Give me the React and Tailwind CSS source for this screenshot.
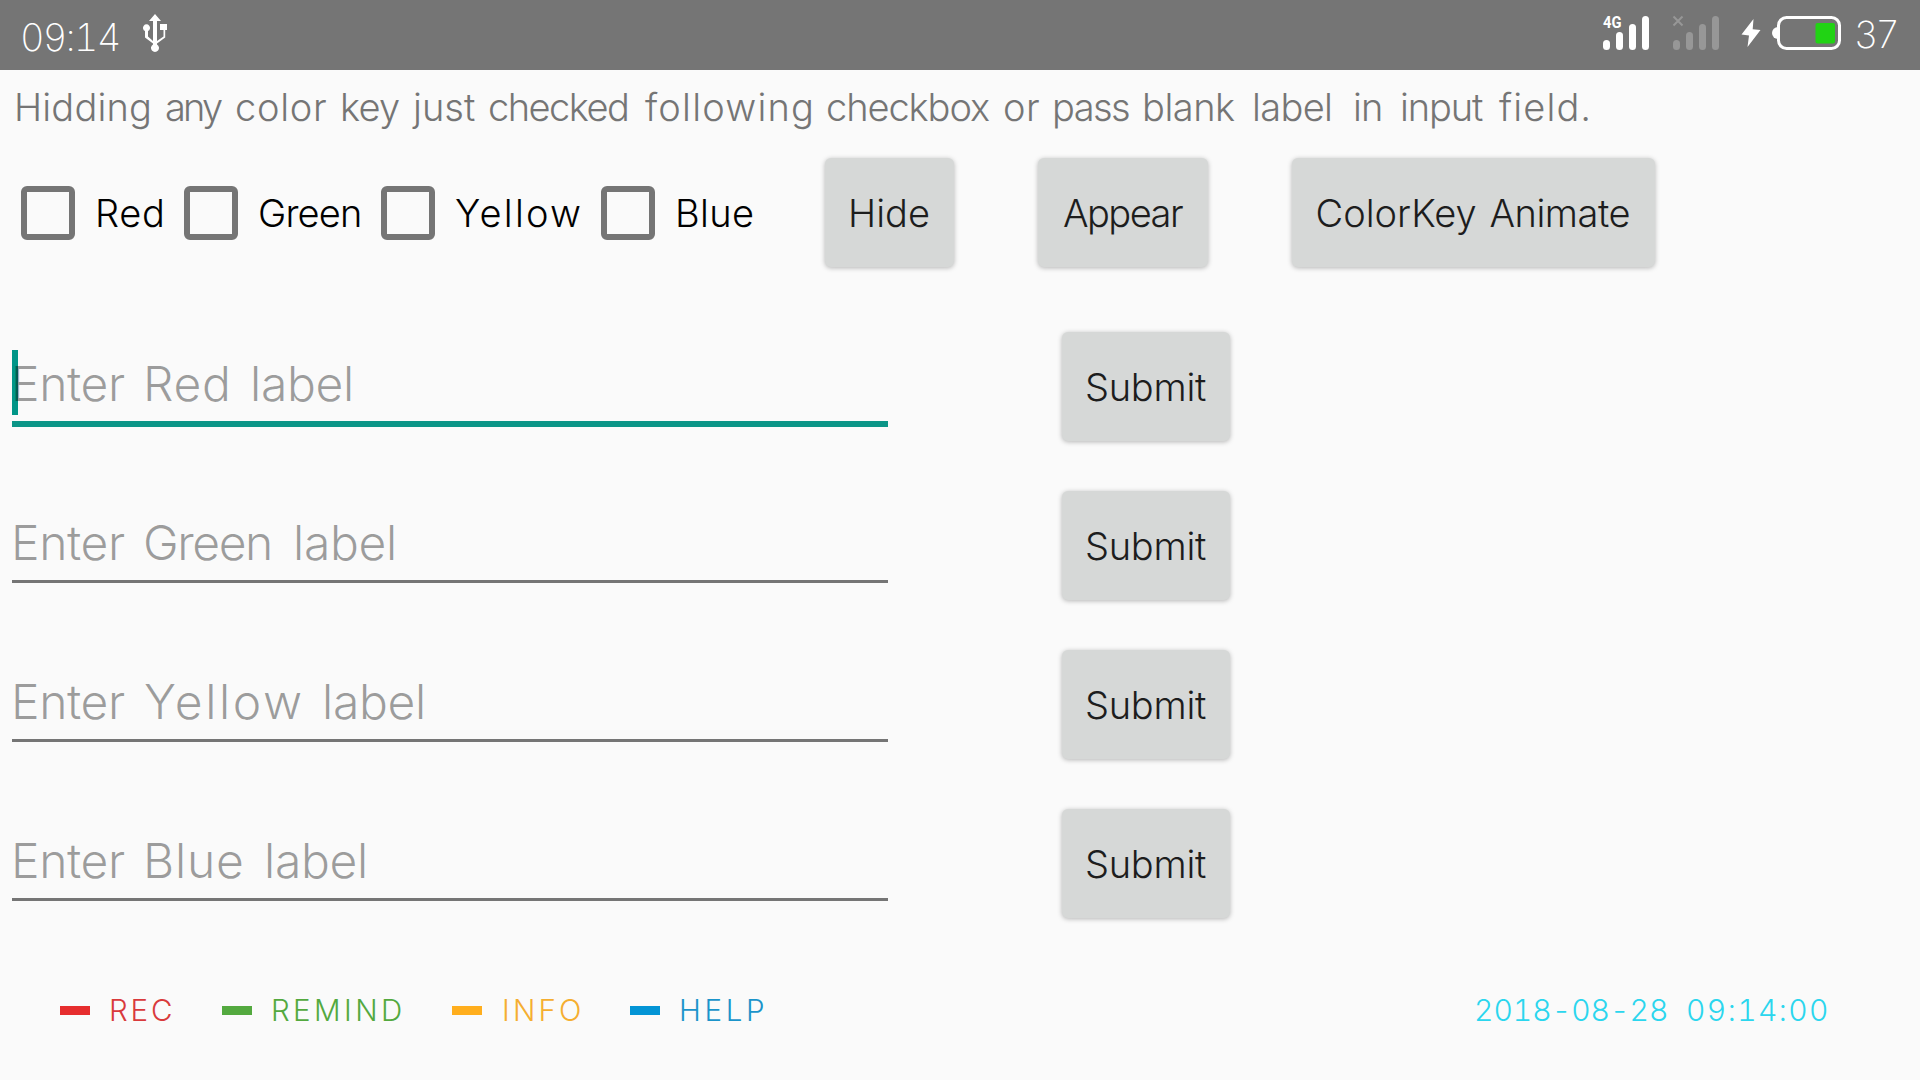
import React, { useLayoutEffect, useRef, useState } from 'react';

const FAMILY = 'Inter, "Liberation Sans", sans-serif';

// One word whose letters are tracked so that its ink spans exactly `w` pixels.
function Word({ text, size, w, weight = 300 }) {
  const ref = useRef(null);
  const [fit, setFit] = useState({ spacing: 0, shift: 0 });
  useLayoutEffect(() => {
    const el = ref.current;
    el.style.letterSpacing = '0px';
    const advance = el.getBoundingClientRect().width;
    const ctx = document.createElement('canvas').getContext('2d');
    ctx.font = `${weight} ${size}px ${FAMILY}`;
    const m = ctx.measureText(text);
    const bearings = m.width - m.actualBoundingBoxRight - m.actualBoundingBoxLeft;
    const spacing = (w - advance + bearings) / Math.max(1, text.length - 1);
    el.style.letterSpacing = `${spacing}px`;
    setFit({ spacing, shift: m.actualBoundingBoxLeft });
  }, [text, size, w, weight]);
  return (
    <span
      className="block shrink-0 whitespace-nowrap"
      style={{ fontSize: size, fontWeight: weight, width: w, textIndent: fit.shift }}
    >
      <span ref={ref} style={{ letterSpacing: fit.spacing }}>{text}</span>
    </span>
  );
}

// A line of words: each entry is [text, ink width, gap before it].
function Line({ words, size, weight }) {
  return (
    <span className="flex items-center">
      {words.map(([text, w, gap = 0], i) => (
        <span key={i} className="flex" style={{ paddingLeft: gap }}>
          <Word text={text} w={w} size={size} weight={weight} />
        </span>
      ))}
    </span>
  );
}

const headline = [
  ['Hidding', 132], ['any', 56, 17], ['color', 89, 15], ['key', 56, 17], ['just', 63, 13], ['checked', 137, 15],
  ['following', 166, 18], ['checkbox', 161, 17], ['or', 34, 16], ['pass', 74, 16], ['blank', 90, 16],
  ['label', 75, 20], ['in', 26, 25], ['input', 81, 21], ['field.', 89, 16],
];

function Signal({ dim }) {
  return (
    <svg className="h-9 w-12 shrink-0 overflow-visible" viewBox="0 0 48 36" fill={dim ? '#979797' : '#ffffff'}>
      <rect x="0" y="25" width="7" height="10" rx="3.5" />
      <rect x="13" y="17" width="7" height="18" rx="3.5" />
      <rect x="26" y="9" width="7" height="26" rx="3.5" />
      <rect x="39" y="1" width="7" height="34" rx="3.5" />
      {dim ? (
        <path d="M0.5 1.5l9 9M9.5 1.5l-9 9" stroke="#979797" strokeWidth="2" />
      ) : (
        <text x="0" y="12.800" fontFamily="Roboto" fontWeight="700" fontSize="16.5" textLength="18.5" lengthAdjust="spacingAndGlyphs">4G</text>
      )}
    </svg>
  );
}

function Usb() {
  return (
    <svg className="ml-6 h-[38px] w-6" viewBox="0 0 24 38" fill="#ffffff">
      <path d="M12 0l6 7h-4v20l6.500-4.500V16H17v-6h7v6h-1.800v7.500L14 29.500v1a4 4 0 1 1-4 0v-1l-8-6V17a3.500 3.500 0 1 1 3 0v5.500L10 27V7H6z" />
    </svg>
  );
}

function StatusBar() {
  return (
    <header className="flex h-[70px] shrink-0 items-center bg-[#757575] pl-[22px] text-white">
      <div className="flex items-center pt-1">
        <Word text="09:14" w={97} size={38} weight={250} />
      </div>
      <div className="flex pb-1"><Usb /></div>
      <div className="ml-auto flex items-center pr-[22px]">
        <div className="flex pb-1">
          <Signal />
          <span className="w-[22px]" />
          <Signal dim />
        </div>
        <svg className="ml-5 h-[30px] w-5 -translate-y-0.5" viewBox="0 0 20 30" fill="#ffffff">
          <path d="M12.500 1L0.500 16.500l7.500 1L6.500 29 19.500 12l-7.800-.8z" />
        </svg>
        <svg className="ml-[11px] h-9 w-[70px] -translate-y-0.5" viewBox="0 0 70 36">
          <path d="M6 12a5.200 5.200 0 0 0 0 12z" fill="#ffffff" />
          <rect x="6.500" y="2.500" width="61" height="31" rx="8" fill="none" stroke="#ffffff" strokeWidth="3" />
          <rect x="43.500" y="8" width="19.500" height="20.500" rx="2" fill="#21d314" />
        </svg>
        <div className="ml-[14px] flex pt-px">
          <Word text="37" w={42} size={37.5} weight={200} />
        </div>
      </div>
    </header>
  );
}

function Check({ label, w, gap, next }) {
  return (
    <label className="flex items-center" style={{ paddingRight: next }}>
      <span className="size-[54px] shrink-0 rounded-[6px] border-[6px] border-[#757575]" />
      <span className="pt-px" style={{ paddingLeft: gap }}><Word text={label} w={w} size={38} /></span>
    </label>
  );
}

function Button({ words, className }) {
  return (
    <button className={`flex h-[109px] shrink-0 items-center justify-center rounded-[6px] bg-[#d6d8d7] text-[#1d1d1d] shadow-[0_1px_5px_rgba(0,0,0,0.28)] ${className}`}>
      <Line words={words} size={38} />
    </button>
  );
}

function Field({ words, focused }) {
  return (
    <div className="flex h-[159px]">
      <div className="relative flex h-[102px] w-[876px] flex-col pt-[25px]">
        {focused && <span className="absolute left-0 top-[25px] h-[65px] w-1.5 bg-[#009688]" />}
        <div className="relative flex h-[67px] items-center pl-[3px] text-black/38">
          <Line words={words} size={48} weight={300} />
        </div>
        <div className={focused ? 'mt-1 h-1.5 shrink-0 bg-[#0b9587]' : 'mt-1 h-[3px] shrink-0 bg-[#757575]'} />
      </div>
      <Button words={[['Submit', 119]]} className="ml-[174px] mt-[7px] w-[168px] pl-px pt-0.5" />
    </div>
  );
}

function Key({ label, w, gap, next, bar, color }) {
  return (
    <div className={`flex items-center ${color}`} style={{ paddingRight: next }}>
      <span className={`h-[9px] w-[30px] ${bar}`} />
      <span className="pt-px" style={{ paddingLeft: gap }}><Word text={label} w={w} size={29.5} /></span>
    </div>
  );
}

export default function App() {
  return (
    <div className="flex h-[1080px] w-[1920px] flex-col overflow-hidden bg-[#fafafa] font-[Inter,'Liberation_Sans',sans-serif] font-light tabular-nums">
      <StatusBar />
      <div className="flex h-[74px] items-center pl-[17px] text-[#757575]">
        <Line words={headline} size={38} />
      </div>
      <div className="flex h-[138px] items-center pl-[21px] text-black">
        <Check label="Red" w={64} gap={23} next={22} />
        <Check label="Green" w={100} gap={22} next={21} />
        <Check label="Yellow" w={124} gap={21} next={21} />
        <Check label="Blue" w={75} gap={23} next={72} />
        <Button words={[['Hide', 78]]} className="mb-0.5 w-[129px] pl-px pt-0.5" />
        <Button words={[['Appear', 119]]} className="mb-0.5 ml-[84px] w-[170px] pt-0.5" />
        <Button words={[['ColorKey', 158], ['Animate', 139, 15]]} className="mb-0.5 ml-[84px] w-[363px] pt-0.5" />
      </div>
      <main className="mt-[43px] pl-3">
        <Field focused words={[['Enter', 110], ['Red', 80, 22], ['label', 97, 27]]} />
        <Field words={[['Enter', 110], ['Green', 124, 21], ['label', 97, 27]]} />
        <Field words={[['Enter', 110], ['Yellow', 156, 20], ['label', 97, 25]]} />
        <Field words={[['Enter', 110], ['Blue', 95, 22], ['label', 97, 26]]} />
      </main>
      <footer className="mt-[29px] flex h-10 items-center pl-[60px] pr-[93px]">
        <Key label="REC" w={60} gap={21} next={51} bar="bg-[#e62d2e]" color="text-[#d93a3c]" />
        <Key label="REMIND" w={128} gap={21} next={51} bar="bg-[#53a93f]" color="text-[#53a93f]" />
        <Key label="INFO" w={76} gap={22} next={50} bar="bg-[#ffae1d]" color="text-[#f5ae30]" />
        <Key label="HELP" w={82} gap={21} next={0} bar="bg-[#0394d5]" color="text-[#1b94ca]" />
        <div className="ml-auto flex pt-px text-[#2bd6ee]">
          <Line words={[['2018-08-28', 191], ['09:14:00', 140, 20]]} size={30} />
        </div>
      </footer>
    </div>
  );
}
